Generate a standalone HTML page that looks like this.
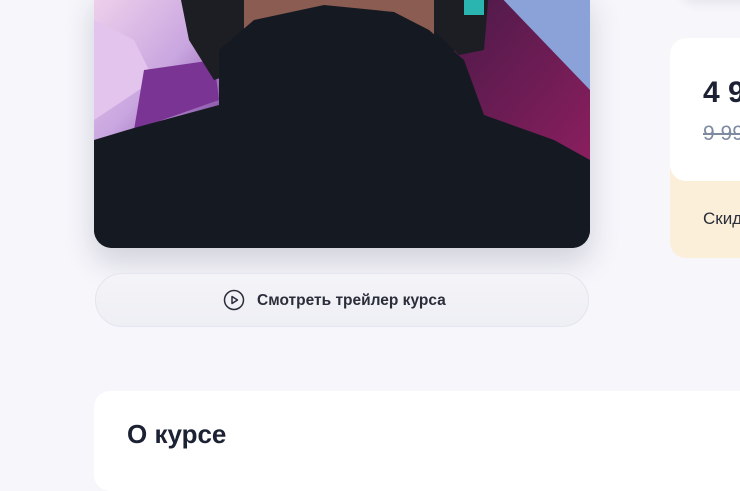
<!DOCTYPE html>
<html><head><meta charset="utf-8"><style>
html,body{margin:0;padding:0;width:740px;height:431px;overflow:hidden;background:#f6f6fb;font-family:"Liberation Sans",sans-serif;}
.img{position:absolute;left:94px;top:-10px;width:496px;height:258px;border-radius:0 0 18px 18px;overflow:hidden;box-shadow:0 14px 30px rgba(40,45,70,.18);}
.btn{position:absolute;left:95px;top:273px;width:492px;height:52px;border:1px solid #e4e5ee;border-radius:27px;background:linear-gradient(#f4f4f8,#eeeff4);}
.btn span{position:absolute;left:161px;top:18px;font-size:15.5px;font-weight:bold;color:#2a2d3a;white-space:nowrap;}
.price{position:absolute;left:670px;top:38px;width:100px;height:220px;border-radius:16px;background:#fcefd9;overflow:hidden;}
.price .w{position:absolute;left:0;top:0;right:0;height:143px;background:#fff;border-radius:16px;}
.price div{white-space:nowrap;}
.card{position:absolute;left:94px;top:391px;width:700px;height:100px;background:#fff;border-radius:16px;}
.topcard{position:absolute;left:680px;top:-40px;width:100px;height:40px;background:#f6f6fb;border-radius:16px;box-shadow:0 4px 10px rgba(40,45,70,.08);}
</style></head><body>
<div class="topcard"></div>
<div class="img">
<svg width="496" height="258" viewBox="0 -10 496 258" xmlns="http://www.w3.org/2000/svg">
<defs>
<linearGradient id="l" x1="0" y1="0" x2="1" y2="1"><stop offset="0" stop-color="#f0d3ec"/><stop offset=".5" stop-color="#c9a6e0"/><stop offset="1" stop-color="#6a2d8e"/></linearGradient>
<linearGradient id="r" x1="0" y1="0" x2="1" y2="1"><stop offset="0" stop-color="#4a1a48"/><stop offset="1" stop-color="#8a1e5e"/></linearGradient>
</defs>
<rect x="0" y="-10" width="496" height="258" fill="#161a21"/>
<rect x="0" y="-10" width="140" height="160" fill="url(#l)"/>
<polygon points="0,20 40,40 60,80 0,120" fill="#e2c4ec"/>
<polygon points="50,70 120,60 125,100 40,130" fill="#7a3494"/>
<rect x="360" y="-10" width="136" height="170" fill="url(#r)"/>
<polygon points="400,-10 496,-10 496,90" fill="#8aa2d8"/>
<rect x="140" y="-10" width="200" height="50" fill="#8a5c52"/>
<polygon points="85,-10 150,-10 150,70 120,80 95,40" fill="#1d1d24"/>
<polygon points="340,-10 395,-10 390,50 365,55 340,30" fill="#1d1d24"/>
<rect x="370" y="-10" width="20" height="25" fill="#2ab5b0"/>
<polygon points="0,140 40,128 125,105 125,50 160,20 230,5 300,12 335,30 370,60 390,115 460,140 496,160 496,248 0,248" fill="#151a22"/>
</svg>
</div>
<div class="btn">
<svg style="position:absolute;left:127px;top:15px" width="22" height="22" viewBox="0 0 22 22"><circle cx="11" cy="11" r="9.5" fill="none" stroke="#2a2d3a" stroke-width="1.5"/><path d="M9 7.5 L14.5 11 L9 14.5 Z" fill="none" stroke="#2a2d3a" stroke-width="1.5" stroke-linejoin="round"/></svg>
<span>Смотреть трейлер курса</span>
</div>
<div class="price"><div class="w">
<div style="position:absolute;left:33px;top:38px;font-size:30px;font-weight:bold;color:#1c2233">4 990</div>
<div style="position:absolute;left:33px;top:84px;font-size:21px;color:#7d8aa0;text-decoration:line-through">9 990</div>
</div>
<div style="position:absolute;left:33px;top:171px;font-size:17px;color:#2a2d3a">Скидка</div>
</div>
<div class="card"><div style="position:absolute;left:33px;top:28px;font-size:26px;font-weight:bold;color:#1c2233">О курсе</div></div>
</body></html>
